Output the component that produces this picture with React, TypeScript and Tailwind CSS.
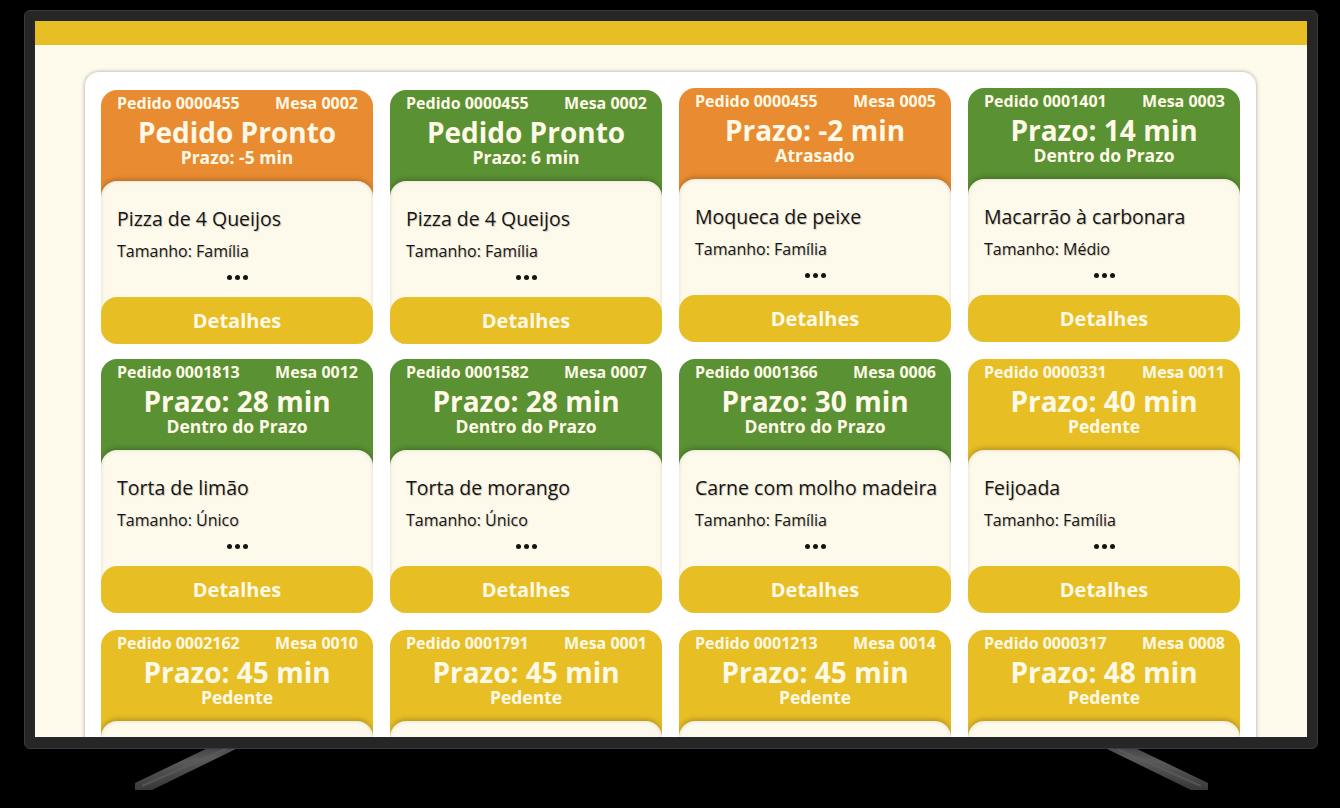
import React from "react";

type Order = {
  color: "orange" | "green" | "yellow";
  pedido: string;
  mesa: string;
  title: string;
  sub: string;
  item: string;
  size: string;
  shift?: boolean;
};

const orders: Order[] = [
  { color: "orange", pedido: "0000455", mesa: "0002", title: "Pedido Pronto", sub: "Prazo: -5 min", item: "Pizza de 4 Queijos", size: "Família", shift: true },
  { color: "green", pedido: "0000455", mesa: "0002", title: "Pedido Pronto", sub: "Prazo: 6 min", item: "Pizza de 4 Queijos", size: "Família", shift: true },
  { color: "orange", pedido: "0000455", mesa: "0005", title: "Prazo: -2 min", sub: "Atrasado", item: "Moqueca de peixe", size: "Família" },
  { color: "green", pedido: "0001401", mesa: "0003", title: "Prazo: 14 min", sub: "Dentro do Prazo", item: "Macarrão à carbonara", size: "Médio" },
  { color: "green", pedido: "0001813", mesa: "0012", title: "Prazo: 28 min", sub: "Dentro do Prazo", item: "Torta de limão", size: "Único" },
  { color: "green", pedido: "0001582", mesa: "0007", title: "Prazo: 28 min", sub: "Dentro do Prazo", item: "Torta de morango", size: "Único" },
  { color: "green", pedido: "0001366", mesa: "0006", title: "Prazo: 30 min", sub: "Dentro do Prazo", item: "Carne com molho madeira", size: "Família" },
  { color: "yellow", pedido: "0000331", mesa: "0011", title: "Prazo: 40 min", sub: "Pedente", item: "Feijoada", size: "Família" },
  { color: "yellow", pedido: "0002162", mesa: "0010", title: "Prazo: 45 min", sub: "Pedente", item: "Lasanha à bolonhesa", size: "Família" },
  { color: "yellow", pedido: "0001791", mesa: "0001", title: "Prazo: 45 min", sub: "Pedente", item: "Risoto de camarão", size: "Médio" },
  { color: "yellow", pedido: "0001213", mesa: "0014", title: "Prazo: 45 min", sub: "Pedente", item: "Frango assado", size: "Família" },
  { color: "yellow", pedido: "0000317", mesa: "0008", title: "Prazo: 48 min", sub: "Pedente", item: "Picanha na chapa", size: "Família" },
];

const bg: Record<Order["color"], string> = {
  orange: "bg-[#e98c31]",
  green: "bg-[#5a9133]",
  yellow: "bg-[#e8be25]",
};

function Card({ o }: { o: Order }) {
  return (
    <div
      className={`${bg[o.color]} ${o.shift ? "mt-[2px] -mb-[2px]" : ""} rounded-[16px] overflow-hidden flex flex-col text-[#fff9e8]`}
    >
      <div className="pt-[3px] pb-[14px] flex flex-col items-center">
        <div className="w-full pl-4 pr-[15px] flex justify-between text-[16px] leading-[20px] font-bold">
          <span>Pedido {o.pedido}</span>
          <span>Mesa {o.mesa}</span>
        </div>
        <div className="mt-[4px] text-[28px] leading-[30px] font-bold">{o.title}</div>
        <div className="text-[17.5px] leading-[20px] font-bold">{o.sub}</div>
      </div>
      <div className="bg-[#fefaeb] rounded-t-[16px] shadow-[0_-2px_5px_rgba(0,0,0,0.22),inset_0_0_4px_rgba(0,0,0,0.12)] flex flex-col">
        <div className="h-[116px] px-4 pt-[25px] flex flex-col text-[#141414] [text-shadow:1px_1px_1px_rgba(0,0,0,0.2)]">
          <div className="text-[19.5px] leading-[26px] font-medium whitespace-nowrap">{o.item}</div>
          <div className="mt-[9px] text-[16px] leading-[20px] font-medium">Tamanho: {o.size}</div>
          <div className="mt-[14px] flex justify-center gap-[3px]">
            <span className="w-[5px] h-[5px] rounded-full bg-[#141414]" />
            <span className="w-[5px] h-[5px] rounded-full bg-[#141414]" />
            <span className="w-[5px] h-[5px] rounded-full bg-[#141414]" />
          </div>
        </div>
        <div className="h-[47px] bg-[#e8be25] rounded-[16px] flex items-center justify-center text-[20px] font-bold text-[#fff9e8]">
          Detalhes
        </div>
      </div>
    </div>
  );
}

export default function App() {
  return (
    <div className="relative w-[1340px] h-[808px] bg-black overflow-hidden font-['Open_Sans',sans-serif]">
      <svg className="absolute left-0 top-0" width="1340" height="808" viewBox="0 0 1340 808">
        <defs>
          <linearGradient id="legL" x1="0" y1="0" x2="0.3" y2="1">
            <stop offset="0" stopColor="#2a2a2a" />
            <stop offset="0.45" stopColor="#5a5a5a" />
            <stop offset="1" stopColor="#333" />
          </linearGradient>
          <linearGradient id="legR" x1="1" y1="0" x2="0.7" y2="1">
            <stop offset="0" stopColor="#2a2a2a" />
            <stop offset="0.45" stopColor="#5a5a5a" />
            <stop offset="1" stopColor="#333" />
          </linearGradient>
        </defs>
        <polygon points="212,746 242,746 152,790 135,790 135,783" fill="url(#legL)" />
        <polygon points="1101,746 1131,746 1208,783 1208,790 1191,790" fill="url(#legR)" />
        <line x1="226" y1="749" x2="142" y2="786" stroke="#5e5e5e" strokeWidth="2" opacity="0.7" />
        <line x1="1117" y1="749" x2="1201" y2="786" stroke="#5e5e5e" strokeWidth="2" opacity="0.7" />
      </svg>
      <div className="relative ml-[24px] mt-[10px] w-[1294px] h-[739px] rounded-[6px] bg-[#262626] border border-[#3a3a3a] p-[10px]">
        <div className="w-[1272px] h-[716px] bg-[#fefaec] overflow-hidden flex flex-col">
          <div className="h-[24px] bg-[#e8be25] shrink-0" />
          <div className="mt-[27px] ml-[50px] w-[1171px] shrink-0 bg-white rounded-[14px] shadow-[0_0_4px_rgba(0,0,0,0.35)] p-4">
            <div className="grid grid-cols-4 gap-[17px] items-start">
              {orders.map((o, i) => (
                <Card key={i} o={o} />
              ))}
            </div>
          </div>
        </div>
      </div>
    </div>
  );
}
